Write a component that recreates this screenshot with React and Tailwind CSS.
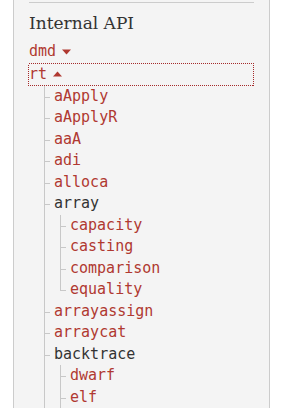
import React from "react";

const tree = [
  { name: "aApply", link: true },
  { name: "aApplyR", link: true },
  { name: "aaA", link: true },
  { name: "adi", link: true },
  { name: "alloca", link: true },
  {
    name: "array",
    children: ["capacity", "casting", "comparison", "equality"],
  },
  { name: "arrayassign", link: true },
  { name: "arraycat", link: true },
  { name: "backtrace", children: ["dwarf", "elf", "handler"] },
];

function Caret({ up }) {
  return (
    <svg width="9" height="6" viewBox="0 0 9 6" className="inline-block ml-[6px] align-middle">
      {up ? <path d="M0 5.5 L4.5 0.5 L9 5.5 Z" fill="#b03931" /> : <path d="M0 0.5 L9 0.5 L4.5 5.5 Z" fill="#b03931" />}
    </svg>
  );
}

function Item({ label, last, link, children }) {
  return (
    <li className="relative pl-[10px]">
      <span className={`absolute left-0 top-0 w-px bg-[#c8c8c8] ${last ? "h-[11px]" : "h-full"}`}></span>
      <span className="absolute left-0 top-[11px] w-[6px] h-px bg-[#c8c8c8]"></span>
      <span className={link ? "text-[#b03931]" : "text-[#333]"}>{label}</span>
      {children}
    </li>
  );
}

export default function App() {
  return (
    <div className="w-[284px] h-[408px] bg-white overflow-hidden">
      <div className="ml-[13px] w-[257px] h-full border-x border-[#cccccc] bg-[#f4f4f4] px-[15px] pt-[2px]">
        <div className="h-px bg-[#cccccc]"></div>
        <h2 className="mt-[10px] text-[#333] text-[17px] leading-[20px]" style={{ fontFamily: "'DejaVu Serif', serif" }}>
          Internal API
        </h2>
        <ul
          className="mt-[8px] text-[15px] leading-[21.5px]"
          style={{ fontFamily: "'DejaVu Sans Mono', monospace" }}
        >
          <li className="text-[#b03931]">
            dmd
            <Caret />
          </li>
          <li>
            <div className="relative text-[#b03931] -ml-px pl-px h-[23px] leading-[23px]">
              rt
              <Caret up />
              <svg className="absolute inset-0 w-full h-full pointer-events-none" preserveAspectRatio="none">
                <rect
                  x="0.5"
                  y="0.5"
                  width="calc(100% - 1px)"
                  height="calc(100% - 1px)"
                  fill="none"
                  stroke="#a52a2a"
                  strokeWidth="1"
                  strokeDasharray="1 1"
                  shapeRendering="crispEdges"
                />
              </svg>
            </div>
            <ul className="ml-[15px]">
              {tree.map((t) => (
                <Item key={t.name} label={t.name} link={t.link}>
                  {t.children && (
                    <ul className="ml-[6px]">
                      {t.children.map((c, j) => (
                        <Item key={c} label={c} link last={j === t.children.length - 1 && t.name === "array"} />
                      ))}
                    </ul>
                  )}
                </Item>
              ))}
            </ul>
          </li>
        </ul>
      </div>
    </div>
  );
}
